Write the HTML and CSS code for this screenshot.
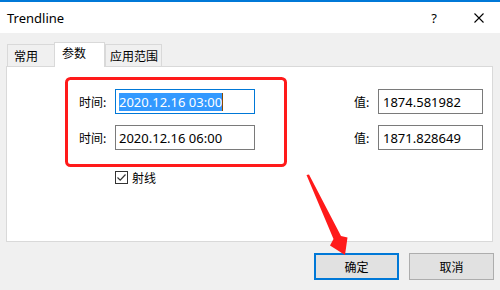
FILE: index.html
```html
<!DOCTYPE html>
<html lang="zh">
<head>
<meta charset="utf-8">
<title>Trendline</title>
<link rel="stylesheet" href="styles.css">
</head>
<body>
<div class="titlebar">
  <span class="title">Trendline</span>
  <span class="help">?</span>
  <svg class="close" width="10" height="10" viewBox="0 0 10 10"><path d="M0.5 0.5L9.5 9.5M9.5 0.5L0.5 9.5" stroke="#000" stroke-width="1.1" fill="none"/></svg>
</div>
<div class="tabs">
  <div class="tab">常用</div>
  <div class="tab active">参数</div>
  <div class="tab wide">应用范围</div>
</div>
<div class="panel">
  <div class="row">
    <span class="lbl">时间:</span>
    <div class="field focus"><span class="sel">2020.12.16 03:00</span><span class="caret"></span></div>
    <span class="lbl2">值:</span>
    <div class="field val">1874.581982</div>
  </div>
  <div class="row second">
    <span class="lbl">时间:</span>
    <div class="field">2020.12.16 06:00</div>
    <span class="lbl2">值:</span>
    <div class="field val">1871.828649</div>
  </div>
  <div class="check-row">
    <span class="box"><svg width="11" height="11" viewBox="0 0 11 11"><path d="M1.5 5.5L4.2 8.2L9.5 2.5" stroke="#333" stroke-width="1.2" fill="none"/></svg></span>
    <span>射线</span>
  </div>
</div>
<div class="actions">
  <div class="btn primary">确定</div>
  <div class="btn">取消</div>
</div>
<svg class="overlay" width="500" height="290" viewBox="0 0 500 290">
  <rect x="66.5" y="78.5" width="219" height="87" rx="4" ry="4" fill="none" stroke="#ff1a1a" stroke-width="3"/>
  <polygon points="306.5,175 309,174.5 341,236 347.5,237.5 345,255 330,245.5 333.5,239" fill="#ff1a1a"/>
</svg>
</body>
</html>
```
FILE: styles.css
```css
html, body {
  margin: 0;
  padding: 0;
}
body {
  width: 500px;
  height: 290px;
  background: #f0f0f0;
  font-family: "Noto Sans", "Noto Sans CJK SC", sans-serif;
  font-size: 12px;
  color: #000;
  overflow: hidden;
  position: relative;
}
.titlebar {
  box-sizing: border-box;
  height: 33px;
  border-top: 2px solid #0078d7;
  background: #fff;
  display: flex;
  align-items: center;
  padding-left: 7px;
}
.title {
  flex: 1;
  font-size: 13px;
}
.help {
  font-size: 13px;
  margin-right: 37px;
}
.close {
  margin-right: 16px;
}
.tabs {
  display: flex;
  align-items: flex-end;
  height: 24px;
  margin-top: 9px;
  padding-left: 7px;
  position: relative;
  z-index: 1;
}
.tab {
  box-sizing: border-box;
  width: 48px;
  height: 22px;
  border: 1px solid #d9d9d9;
  border-bottom: none;
  background: #f0f0f0;
  font-family: "Noto Sans CJK SC", sans-serif;
  padding-left: 6px;
  line-height: 21px;
}
.tab.active {
  width: 51px;
  height: 25px;
  margin-bottom: -1px;
  background: #fff;
  padding-left: 7px;
  line-height: 20px;
  margin-left: -1px;
}
.tab.wide {
  width: 57px;
  padding-left: 4px;
}
.panel {
  box-sizing: border-box;
  width: 487px;
  height: 176px;
  margin-left: 6px;
  border: 1px solid #d9d9d9;
  background: #fff;
  padding-top: 22px;
}
.row {
  display: flex;
  align-items: center;
  padding-left: 72px;
  height: 25px;
}
.row.second {
  margin-top: 11px;
}
.lbl {
  width: 36px;
  font-family: "Noto Sans CJK SC", sans-serif;
}
.lbl2 {
  width: 24px;
  margin-left: 99px;
  font-family: "Noto Sans CJK SC", sans-serif;
}
.field {
  box-sizing: border-box;
  width: 140px;
  height: 25px;
  border: 1px solid #7a7a7a;
  padding-left: 3px;
  display: flex;
  align-items: center;
  font-size: 13px;
}
.field.focus {
  border-color: #0078d7;
}
.field.val {
  width: 105px;
  padding-left: 4px;
}
.sel {
  background: #3399ff;
  color: #fff;
  line-height: 18px;
}
.caret {
  width: 1px;
  height: 18px;
  background: #8a4a00;
}
.check-row {
  display: flex;
  align-items: center;
  margin-top: 19px;
  padding-left: 108px;
  font-family: "Noto Sans CJK SC", sans-serif;
  gap: 4px;
}
.box {
  box-sizing: border-box;
  width: 13px;
  height: 13px;
  border: 1px solid #333;
  display: flex;
}
.actions {
  display: flex;
  justify-content: flex-end;
  gap: 10px;
  margin-top: 11px;
  padding-right: 6px;
}
.btn {
  box-sizing: border-box;
  width: 85px;
  height: 27px;
  border: 1px solid #adadad;
  background: #e1e1e1;
  display: flex;
  align-items: center;
  justify-content: center;
  font-family: "Noto Sans CJK SC", sans-serif;
}
.btn.primary {
  border: 2px solid #0078d7;
}
.overlay {
  position: absolute;
  left: 0;
  top: 0;
  pointer-events: none;
}
```
